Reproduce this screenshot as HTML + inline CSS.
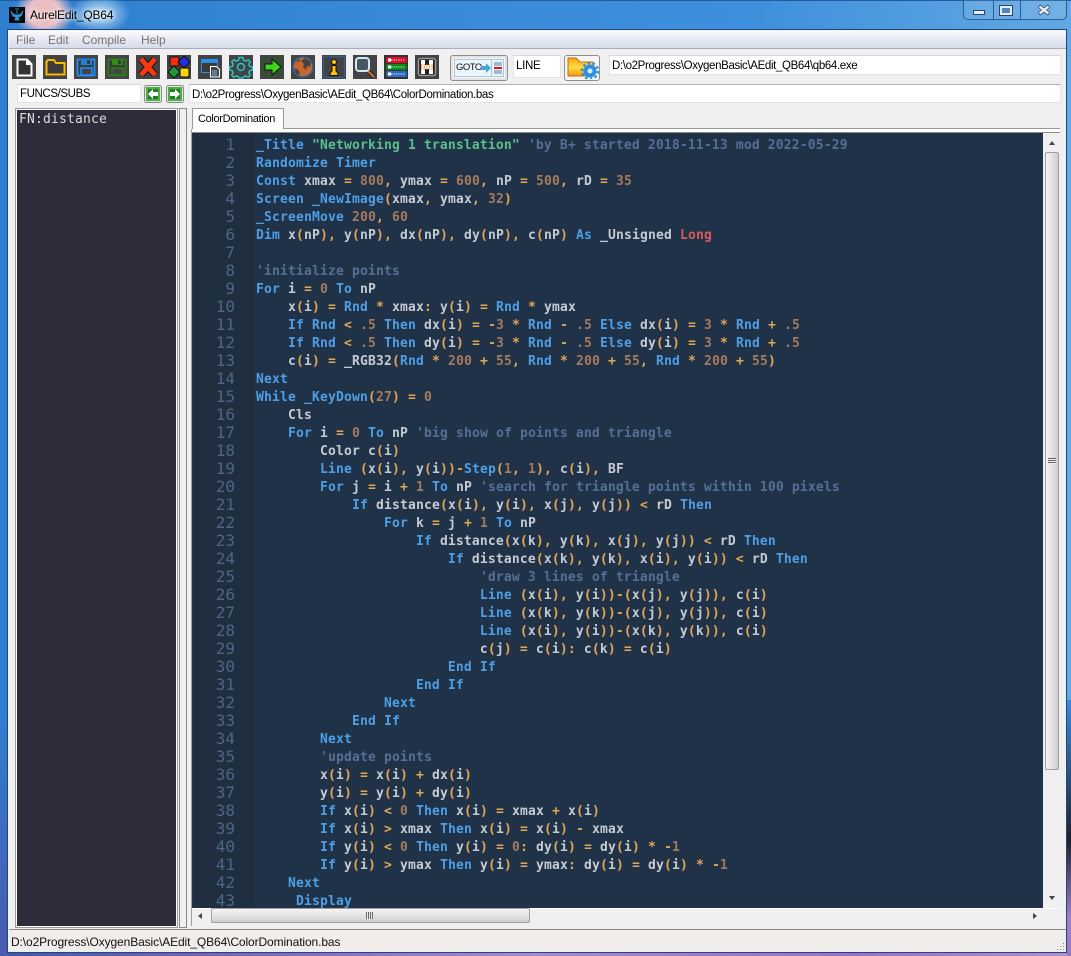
<!DOCTYPE html>
<html><head><meta charset="utf-8"><style>
html,body{margin:0;padding:0;width:1071px;height:956px;overflow:hidden;background:#3a8bdc;font-family:"Liberation Sans",sans-serif;font-size:12px;color:#000}
.a{position:absolute}
#frame{left:0;top:0;width:1071px;height:956px;overflow:hidden;background:linear-gradient(90deg,#2f7fd0 0,#3a8ad9 40%,#3e8fdc 70%,#62a8e2 100%)}
#client{left:8px;top:30px;width:1058px;height:922px;background:#f0f0f0;box-shadow:0 0 0 1px #1d4a78}
.ed{background:#fff;border:1px solid #e4e4e4;border-top-color:#d8d8d8;box-sizing:border-box;white-space:pre;padding-left:2px;font-size:11.5px;letter-spacing:-.36px;overflow:hidden}
svg{position:absolute;display:block}
#code{left:256px;top:137px;width:786px;height:771px;overflow:hidden;font:13px/18px "DejaVu Sans Mono",monospace;letter-spacing:.17px;color:#c5cbd3;white-space:pre;font-weight:400}
#nums{left:193px;top:136px;width:42px;height:772px;overflow:hidden;font:16px/18px "DejaVu Sans Mono",monospace;color:#4c6688;text-align:right;white-space:pre}
i{font-style:normal}
.k{color:#4f9fe6;font-weight:700}.n{color:#a67a5e;font-weight:700}.o{color:#e3a857;font-weight:700}.c{color:#566f96;font-weight:700}.s{color:#5cbf8c;font-weight:700}.r{color:#d9595f;font-weight:700}.w{font-weight:700}
</style></head><body>
<div id="frame" class="a">
<div class="a" style="left:0;top:0;width:1071px;height:1px;background:#1f5d9c"></div>
<div class="a" style="left:14px;top:-12px;width:60px;height:50px;background:radial-gradient(closest-side,#f0b8b4 0,#e8c0c8 55%,rgba(90,150,220,0) 100%)"></div>
<div class="a" style="left:70px;top:-6px;width:60px;height:40px;background:radial-gradient(closest-side,#c8e4f6 0,rgba(200,230,250,.5) 50%,rgba(90,150,220,0) 100%)"></div>
<div class="a" style="left:0;top:945px;width:1071px;height:11px;background:linear-gradient(90deg,#3c5aa8 0,#7a62b8 20%,#a888d0 50%,#9a70c4 80%,#b090d0 100%)"></div>
<div class="a" style="left:1067px;top:700px;width:4px;height:256px;background:linear-gradient(180deg,#3a8ad9 0,#20202a 55%,#a080c8 85%,#9a78c0 100%)"></div>
<div class="a" style="left:0;top:700px;width:8px;height:256px;background:linear-gradient(180deg,#2f7fd0 0,#4a5ab0 100%)"></div>
<svg style="left:9px;top:7px" width="16" height="16" viewBox="0 0 16 16"><rect width="16" height="16" fill="#0a0a0e"/><path d="M8 3v4M6 2h4M2 4l2 5 3 1-1 3h4l-1-3 3-1 2-5-2 3-3 1H7L4 7z" fill="#2f9bd0" stroke="#2f9bd0" stroke-width=".8"/></svg>
<div class="a" style="left:30px;top:7px;font-size:12px;letter-spacing:-.2px;line-height:16px;color:#000;text-shadow:0 0 6px #fff,0 0 6px #fff">AurelEdit_QB64</div>
<!-- caption buttons -->
<div class="a" style="left:963px;top:0;width:104px;height:20px;box-sizing:border-box;border:1px solid #2a609a;border-top:0;border-radius:0 0 5px 5px;background:rgba(255,255,255,.1)"></div>
<div class="a" style="left:993px;top:0;width:1px;height:19px;background:#2a609a"></div>
<div class="a" style="left:1020px;top:0;width:1px;height:19px;background:#2a609a"></div>
<div class="a" style="left:973px;top:10px;width:12px;height:5px;background:#e8eef5;border:1px solid #24476e;box-sizing:border-box"></div>
<div class="a" style="left:1000px;top:6px;width:12px;height:9px;border:2px solid #e8eef5;box-sizing:border-box;outline:1px solid #24476e;background:#4a86c4"></div>
<svg style="left:1037px;top:4px" width="14" height="12"><path d="M2 2l10 8M12 2 2 10" stroke="#24476e" stroke-width="4"/><path d="M2.500 2.500l9 7M11.500 2.500l-9 7" stroke="#e8eef5" stroke-width="2.400"/></svg>
<div id="client" class="a"></div>
<!-- menu -->
<div class="a" style="left:9px;top:31px;width:1057px;height:17px;background:linear-gradient(180deg,#fafbfd 0,#eef0f6 30%,#d6dbeb 100%);border-bottom:1px solid #a9adba"></div>
<div class="a" style="left:16px;top:33px;color:#77736e;font-size:12px;line-height:14px">File</div>
<div class="a" style="left:48px;top:33px;color:#77736e;font-size:12px;line-height:14px">Edit</div>
<div class="a" style="left:82px;top:33px;color:#77736e;font-size:12px;line-height:14px">Compile</div>
<div class="a" style="left:141px;top:33px;color:#77736e;font-size:12px;line-height:14px">Help</div>
<!-- toolbar icons -->
<svg style="left:12px;top:55px" width="24" height="24"><rect width="24" height="24" fill="#434343"/><path d="M5.500 4.500H15L19.500 9V20.500H5.500Z" fill="#333" stroke="#fff" stroke-width="2"/><path d="M14 4v6h6z" fill="#fff"/></svg>
<svg style="left:43px;top:55px" width="24" height="24"><rect width="24" height="24" fill="#434343"/><path d="M3.500 6.500 5 5h6l2 3h8.500v11.500H3.500Z" fill="#3d3d3d" stroke="#fdb900" stroke-width="2"/></svg>
<svg style="left:74px;top:55px" width="24" height="24"><rect width="24" height="24" fill="#434343"/><path d="M3.500 4.500H20.500V20.500H3.500Z" fill="#3a3a3a" stroke="#1e90ff" stroke-width="1.800"/><rect x="7" y="4" width="11" height="6" fill="#1e7fe0"/><rect x="13" y="5" width="3" height="4" fill="#3a3a3a"/><rect x="7" y="13" width="11" height="7" fill="#444" stroke="#1e90ff" stroke-width="1.500"/></svg>
<svg style="left:105px;top:55px" width="24" height="24"><rect width="24" height="24" fill="#434343"/><path d="M3.500 4.500H20.500V20.500H3.500Z" fill="#3a3a3a" stroke="#2e7d1a" stroke-width="1.800"/><rect x="7" y="4" width="11" height="6" fill="#2e8f12"/><rect x="13" y="5" width="3" height="4" fill="#3a3a3a"/><rect x="7" y="13" width="11" height="7" fill="#444" stroke="#2e7d1a" stroke-width="1.500"/></svg>
<svg style="left:136px;top:55px" width="24" height="24"><rect width="24" height="24" fill="#434343"/><path d="M5 4l14 16M19 4 5 20" stroke="#111" stroke-width="7"/><path d="M5 4l14 16M19 4 5 20" stroke="#f93a0e" stroke-width="5"/></svg>
<svg style="left:167px;top:55px" width="24" height="24"><rect width="24" height="24" fill="#434343"/><rect x="3" y="2" width="9" height="9" rx="1" fill="#f52d0c" stroke="#111"/><path d="M17 1l6 6-6 6-6-6z" fill="#2430e0" stroke="#111"/><path d="M7 11l6 6-6 6-6-6z" fill="#1c9a3a" stroke="#111"/><rect x="13" y="13" width="9" height="9" rx="1.500" fill="#fdd20a" stroke="#111"/></svg>
<svg style="left:198px;top:55px" width="24" height="24"><rect width="24" height="24" fill="#434343"/><rect x="3.500" y="4.500" width="16" height="13" fill="#3b3b3b" stroke="#2a90e8"/><rect x="3" y="4" width="17" height="4" fill="#2a90e8"/><path d="M12.500 11.500h6l3 3v7.500h-9z" fill="#444" stroke="#fff"/><path d="M14 16h5M14 18h5M14 20h5" stroke="#7fb7e6"/></svg>
<svg style="left:229px;top:55px" width="24" height="24" viewBox="0 0 24 24"><rect width="24" height="24" fill="#434343"/><path d="M10 2.500h4l.6 2.800 2.200.9 2.400-1.500 2.100 2.100-1.500 2.400.9 2.200 2.800.6v3l-2.800.6-.9 2.200 1.500 2.400-2.100 2.100-2.400-1.500-2.200.9-.6 1.300h-4l-.6-1.300-2.200-.9-2.400 1.500-2.100-2.100 1.500-2.400-.9-2.200-2.800-.6v-3l2.800-.6.9-2.200-1.500-2.400 2.100-2.100 2.400 1.500 2.200-.9z" fill="none" stroke="#27c6cf" stroke-width="1.400"/><circle cx="12" cy="12" r="3.500" fill="none" stroke="#27c6cf" stroke-width="1.500"/></svg>
<svg style="left:260px;top:55px" width="24" height="24"><rect width="24" height="24" fill="#434343"/><rect x="2.500" y="4.500" width="19" height="15" rx="3" fill="none" stroke="#0f6d10"/><path d="M5 9h7V4l9 8-9 8v-5H5z" fill="#3fd51a" stroke="#111"/></svg>
<svg style="left:291px;top:55px" width="24" height="24"><rect width="24" height="24" fill="#434343"/><circle cx="12" cy="12" r="10" fill="#c5662f" stroke="#2d5f99" stroke-width="1.500"/><path d="M3 14c3-1 5 1 6 5l-3 1zM14 3l6 4-1 5-3-1-1 4-3-3 1-3-3-3zM5 6l4-2-1 3z" fill="#444"/></svg>
<svg style="left:322px;top:55px" width="24" height="24"><rect width="24" height="24" fill="#434343"/><rect x="1.500" y="1.500" width="21" height="21" fill="none" stroke="#2d5f99" stroke-width="1.200"/><circle cx="12" cy="7" r="2.500" fill="#fdc30a" stroke="#111"/><path d="M10 10.500h4V16l2 2v2.500H8V18l2-2z" fill="#fdc30a" stroke="#111"/></svg>
<svg style="left:353px;top:55px" width="24" height="24"><rect width="24" height="24" fill="#434343"/><path d="M14 15l7 7" stroke="#222" stroke-width="4"/><path d="M14 15l7 7" stroke="#d9772b" stroke-width="2"/><rect x="3" y="3" width="13" height="13" rx="3" fill="#4a5560" stroke="#cfe8f6" stroke-width="2"/></svg>
<svg style="left:384px;top:55px" width="24" height="24"><rect width="24" height="24" fill="#333"/><rect x="2" y="2" width="21" height="6" rx="2" fill="#e0102a"/><rect x="2" y="9" width="21" height="6" rx="2" fill="#0a8a1a"/><rect x="2" y="16" width="21" height="6" rx="2" fill="#2a6cc8"/><path d="M7 5h13M7 12h13M7 19h13" stroke="#fff" stroke-dasharray="1.200 1.200"/><rect x="4" y="3.500" width="3" height="3" fill="#fff"/><rect x="4" y="10.500" width="3" height="3" fill="#fff"/><rect x="4" y="17.500" width="3" height="3" fill="#fff"/></svg>
<svg style="left:415px;top:55px" width="24" height="24"><rect width="24" height="24" fill="#434343"/><rect x="3.500" y="3.500" width="17" height="17" rx="2" fill="#222" stroke="#999" stroke-width="1.500"/><rect x="6" y="5" width="4" height="14" fill="#fff"/><rect x="14" y="5" width="4" height="14" fill="#fff"/><rect x="10" y="10" width="4" height="4" fill="#fff"/><path d="M6 10h12M6 12h12M6 14h12" stroke="#f08030" stroke-dasharray="1.300 1.300" stroke-width="1.300"/></svg>
<!-- goto -->
<div class="a" style="left:450px;top:55px;width:58px;height:26px;box-sizing:border-box;border:1px solid #8e8e8e;border-radius:3px;background:#f4f4f4;box-shadow:inset 0 0 0 2px #e4e4e4"></div>
<div class="a" style="left:454px;top:59px;width:50px;height:18px;box-sizing:border-box;border:1px solid #a8c8e0;background:#eaf4fb"></div>
<div class="a" style="left:456px;top:60px;font:400 9.500px/16px 'Liberation Sans',sans-serif;letter-spacing:-.5px;color:#111">GOTO</div>
<svg style="left:481px;top:60px" width="24" height="16"><path d="M0 6h5V3l5 5-5 5v-3H0z" fill="#45a5de"/><rect x="10" y="0" width="1" height="16" fill="#a8c8e0"/><path d="M13 3h8M13 5h8M13 11h8M13 13h8" stroke="#5a7ca0"/><path d="M13 8h8" stroke="#e01818" stroke-width="2"/></svg>
<div class="a ed" style="left:513px;top:55px;width:48px;height:23px;line-height:20px;padding-left:2px;font-size:11.500px;letter-spacing:-.3px">LINE</div>
<div class="a" style="left:564px;top:55px;width:36px;height:26px;box-sizing:border-box;border:1px solid #8e8e8e;border-radius:3px;background:#f6f6f6"></div>
<svg style="left:567px;top:57px" width="32" height="22"><defs><linearGradient id="fg" x1="0" y1="0" x2="0" y2="1"><stop offset="0" stop-color="#f7a41c"/><stop offset=".5" stop-color="#ffdc3c"/><stop offset="1" stop-color="#f09a18"/></linearGradient></defs><path d="M1 1h8l4 4h13v14H1z" fill="url(#fg)" stroke="#c06a10"/><circle cx="23" cy="14" r="6.500" fill="#2f8fdc"/><circle cx="23" cy="14" r="8" fill="none" stroke="#2f8fdc" stroke-width="2.500" stroke-dasharray="2.500 2.500"/><circle cx="23" cy="14" r="2.500" fill="#d5ecfb"/></svg>
<div class="a ed" style="left:609px;top:55px;width:452px;height:20px;line-height:20px">D:\o2Progress\OxygenBasic\AEdit_QB64\qb64.exe</div>
<!-- row 2 -->
<div class="a ed" style="left:17px;top:84px;width:124px;height:19px;line-height:19px;letter-spacing:-.4px">FUNCS/SUBS</div>
<svg style="left:144px;top:85px" width="18" height="18"><rect x=".5" y=".5" width="17" height="17" rx="2" fill="#dfe8dc" stroke="#8a8a8a"/><rect x="2" y="2" width="14" height="14" fill="#4fae45"/><rect x="4" y="4" width="10" height="10" fill="#1f7f22"/><path d="M4 9l5-5v3h5v4H9v3z" fill="#fff"/></svg>
<svg style="left:166px;top:85px" width="18" height="18"><rect x=".5" y=".5" width="17" height="17" rx="2" fill="#dfe8dc" stroke="#8a8a8a"/><rect x="2" y="2" width="14" height="14" fill="#4fae45"/><rect x="4" y="4" width="10" height="10" fill="#1f7f22"/><path d="M14 9L9 4v3H4v4h5v3z" fill="#fff"/></svg>
<div class="a ed" style="left:189px;top:84px;width:872px;height:19px;line-height:20px;border-top:1px solid #b0b0b0">D:\o2Progress\OxygenBasic\AEdit_QB64\ColorDomination.bas</div>
<!-- left list -->
<div class="a" style="left:15px;top:108px;width:163px;height:820px;box-sizing:border-box;background:#2d2c3a;border:2px solid #fff;outline:1px solid #9a9a9a;outline-offset:-1px"></div>
<div class="a" style="left:19px;top:112px;font:13px/15px 'DejaVu Sans Mono',monospace;letter-spacing:.17px;color:#dcdce0">FN:distance</div>
<div class="a" style="left:179px;top:108px;width:8px;height:820px;box-sizing:border-box;border:1px solid #8a8a8a;background:#f0f0f0"></div>
<!-- tab -->
<div class="a" style="left:192px;top:108px;width:92px;height:21px;box-sizing:border-box;border:1px solid #9a9a9a;border-bottom:0;background:#fff;text-align:center;line-height:20px;font-size:11px;letter-spacing:-.33px;padding-right:3px">ColorDomination</div>
<div class="a" style="left:284px;top:128px;width:776px;height:1px;background:#9a9a9a"></div>
<div class="a" style="left:192px;top:129px;width:868px;height:4px;background:#fff"></div>
<div class="a" style="left:192px;top:132px;width:868px;height:1px;background:#8a8a8a"></div>
<!-- editor -->
<div class="a" style="left:191px;top:129px;width:1px;height:797px;background:#a0a0a0"></div>
<div class="a" style="left:192px;top:133px;width:851px;height:775px;background:#203247"></div>
<div class="a" style="left:193px;top:133px;width:62px;height:775px;background:#1f2f3f"></div>
<div id="nums" class="a">1
2
3
4
5
6
7
8
9
10
11
12
13
14
15
16
17
18
19
20
21
22
23
24
25
26
27
28
29
30
31
32
33
34
35
36
37
38
39
40
41
42
43</div>
<div id="code" class="a"><i class="k">_Title</i> <i class="s">"Networking 1 translation"</i> <i class="c">'by B+ started 2018-11-13 mod 2022-05-29</i>
<i class="k">Randomize Timer</i>
<i class="k">Const</i> <i class="w">xmax</i> <i class="o">=</i> <i class="n">800</i><i class="o">,</i> <i class="w">ymax</i> <i class="o">=</i> <i class="n">600</i><i class="o">,</i> <i class="w">nP</i> <i class="o">=</i> <i class="n">500</i><i class="o">,</i> <i class="w">rD</i> <i class="o">=</i> <i class="n">35</i>
<i class="k">Screen _NewImage</i><i class="o">(</i><i class="w">xmax</i><i class="o">,</i> <i class="w">ymax</i><i class="o">,</i> <i class="n">32</i><i class="o">)</i>
<i class="k">_ScreenMove</i> <i class="n">200</i><i class="o">,</i> <i class="n">60</i>
<i class="k">Dim</i> <i class="w">x</i><i class="o">(</i><i class="w">nP</i><i class="o">),</i> <i class="w">y</i><i class="o">(</i><i class="w">nP</i><i class="o">),</i> <i class="w">dx</i><i class="o">(</i><i class="w">nP</i><i class="o">),</i> <i class="w">dy</i><i class="o">(</i><i class="w">nP</i><i class="o">),</i> <i class="w">c</i><i class="o">(</i><i class="w">nP</i><i class="o">)</i> <i class="k">As</i> <i class="w">_Unsigned</i> <i class="r">Long</i>

<i class="c">'initialize points</i>
<i class="k">For</i> <i class="w">i</i> <i class="o">=</i> <i class="n">0</i> <i class="k">To</i> <i class="w">nP</i>
    <i class="w">x</i><i class="o">(</i><i class="w">i</i><i class="o">)</i> <i class="o">=</i> <i class="k">Rnd</i> <i class="o">*</i> <i class="w">xmax</i><i class="o">:</i> <i class="w">y</i><i class="o">(</i><i class="w">i</i><i class="o">)</i> <i class="o">=</i> <i class="k">Rnd</i> <i class="o">*</i> <i class="w">ymax</i>
    <i class="k">If Rnd</i> <i class="o">&lt;</i> <i class="n">.5</i> <i class="k">Then</i> <i class="w">dx</i><i class="o">(</i><i class="w">i</i><i class="o">)</i> <i class="o">=</i> <i class="o">-</i><i class="n">3</i> <i class="o">*</i> <i class="k">Rnd</i> <i class="o">-</i> <i class="n">.5</i> <i class="k">Else</i> <i class="w">dx</i><i class="o">(</i><i class="w">i</i><i class="o">)</i> <i class="o">=</i> <i class="n">3</i> <i class="o">*</i> <i class="k">Rnd</i> <i class="o">+</i> <i class="n">.5</i>
    <i class="k">If Rnd</i> <i class="o">&lt;</i> <i class="n">.5</i> <i class="k">Then</i> <i class="w">dy</i><i class="o">(</i><i class="w">i</i><i class="o">)</i> <i class="o">=</i> <i class="o">-</i><i class="n">3</i> <i class="o">*</i> <i class="k">Rnd</i> <i class="o">-</i> <i class="n">.5</i> <i class="k">Else</i> <i class="w">dy</i><i class="o">(</i><i class="w">i</i><i class="o">)</i> <i class="o">=</i> <i class="n">3</i> <i class="o">*</i> <i class="k">Rnd</i> <i class="o">+</i> <i class="n">.5</i>
    <i class="w">c</i><i class="o">(</i><i class="w">i</i><i class="o">)</i> <i class="o">=</i> <i class="w">_RGB32</i><i class="o">(</i><i class="k">Rnd</i> <i class="o">*</i> <i class="n">200</i> <i class="o">+</i> <i class="n">55</i><i class="o">,</i> <i class="k">Rnd</i> <i class="o">*</i> <i class="n">200</i> <i class="o">+</i> <i class="n">55</i><i class="o">,</i> <i class="k">Rnd</i> <i class="o">*</i> <i class="n">200</i> <i class="o">+</i> <i class="n">55</i><i class="o">)</i>
<i class="k">Next</i>
<i class="k">While _KeyDown</i><i class="o">(</i><i class="n">27</i><i class="o">)</i> <i class="o">=</i> <i class="n">0</i>
    <i class="w">Cls</i>
    <i class="k">For</i> <i class="w">i</i> <i class="o">=</i> <i class="n">0</i> <i class="k">To</i> <i class="w">nP</i> <i class="c">'big show of points and triangle</i>
        <i class="w">Color c</i><i class="o">(</i><i class="w">i</i><i class="o">)</i>
        <i class="k">Line</i> <i class="o">(</i><i class="w">x</i><i class="o">(</i><i class="w">i</i><i class="o">),</i> <i class="w">y</i><i class="o">(</i><i class="w">i</i><i class="o">))-</i><i class="k">Step</i><i class="o">(</i><i class="n">1</i><i class="o">,</i> <i class="n">1</i><i class="o">),</i> <i class="w">c</i><i class="o">(</i><i class="w">i</i><i class="o">),</i> <i class="w">BF</i>
        <i class="k">For</i> <i class="w">j</i> <i class="o">=</i> <i class="w">i</i> <i class="o">+</i> <i class="n">1</i> <i class="k">To</i> <i class="w">nP</i> <i class="c">'search for triangle points within 100 pixels</i>
            <i class="k">If</i> <i class="w">distance</i><i class="o">(</i><i class="w">x</i><i class="o">(</i><i class="w">i</i><i class="o">),</i> <i class="w">y</i><i class="o">(</i><i class="w">i</i><i class="o">),</i> <i class="w">x</i><i class="o">(</i><i class="w">j</i><i class="o">),</i> <i class="w">y</i><i class="o">(</i><i class="w">j</i><i class="o">))</i> <i class="o">&lt;</i> <i class="w">rD</i> <i class="k">Then</i>
                <i class="k">For</i> <i class="w">k</i> <i class="o">=</i> <i class="w">j</i> <i class="o">+</i> <i class="n">1</i> <i class="k">To</i> <i class="w">nP</i>
                    <i class="k">If</i> <i class="w">distance</i><i class="o">(</i><i class="w">x</i><i class="o">(</i><i class="w">k</i><i class="o">),</i> <i class="w">y</i><i class="o">(</i><i class="w">k</i><i class="o">),</i> <i class="w">x</i><i class="o">(</i><i class="w">j</i><i class="o">),</i> <i class="w">y</i><i class="o">(</i><i class="w">j</i><i class="o">))</i> <i class="o">&lt;</i> <i class="w">rD</i> <i class="k">Then</i>
                        <i class="k">If</i> <i class="w">distance</i><i class="o">(</i><i class="w">x</i><i class="o">(</i><i class="w">k</i><i class="o">),</i> <i class="w">y</i><i class="o">(</i><i class="w">k</i><i class="o">),</i> <i class="w">x</i><i class="o">(</i><i class="w">i</i><i class="o">),</i> <i class="w">y</i><i class="o">(</i><i class="w">i</i><i class="o">))</i> <i class="o">&lt;</i> <i class="w">rD</i> <i class="k">Then</i>
                            <i class="c">'draw 3 lines of triangle</i>
                            <i class="k">Line</i> <i class="o">(</i><i class="w">x</i><i class="o">(</i><i class="w">i</i><i class="o">),</i> <i class="w">y</i><i class="o">(</i><i class="w">i</i><i class="o">))-(</i><i class="w">x</i><i class="o">(</i><i class="w">j</i><i class="o">),</i> <i class="w">y</i><i class="o">(</i><i class="w">j</i><i class="o">)),</i> <i class="w">c</i><i class="o">(</i><i class="w">i</i><i class="o">)</i>
                            <i class="k">Line</i> <i class="o">(</i><i class="w">x</i><i class="o">(</i><i class="w">k</i><i class="o">),</i> <i class="w">y</i><i class="o">(</i><i class="w">k</i><i class="o">))-(</i><i class="w">x</i><i class="o">(</i><i class="w">j</i><i class="o">),</i> <i class="w">y</i><i class="o">(</i><i class="w">j</i><i class="o">)),</i> <i class="w">c</i><i class="o">(</i><i class="w">i</i><i class="o">)</i>
                            <i class="k">Line</i> <i class="o">(</i><i class="w">x</i><i class="o">(</i><i class="w">i</i><i class="o">),</i> <i class="w">y</i><i class="o">(</i><i class="w">i</i><i class="o">))-(</i><i class="w">x</i><i class="o">(</i><i class="w">k</i><i class="o">),</i> <i class="w">y</i><i class="o">(</i><i class="w">k</i><i class="o">)),</i> <i class="w">c</i><i class="o">(</i><i class="w">i</i><i class="o">)</i>
                            <i class="w">c</i><i class="o">(</i><i class="w">j</i><i class="o">)</i> <i class="o">=</i> <i class="w">c</i><i class="o">(</i><i class="w">i</i><i class="o">):</i> <i class="w">c</i><i class="o">(</i><i class="w">k</i><i class="o">)</i> <i class="o">=</i> <i class="w">c</i><i class="o">(</i><i class="w">i</i><i class="o">)</i>
                        <i class="k">End If</i>
                    <i class="k">End If</i>
                <i class="k">Next</i>
            <i class="k">End If</i>
        <i class="k">Next</i>
        <i class="c">'update points</i>
        <i class="w">x</i><i class="o">(</i><i class="w">i</i><i class="o">)</i> <i class="o">=</i> <i class="w">x</i><i class="o">(</i><i class="w">i</i><i class="o">)</i> <i class="o">+</i> <i class="w">dx</i><i class="o">(</i><i class="w">i</i><i class="o">)</i>
        <i class="w">y</i><i class="o">(</i><i class="w">i</i><i class="o">)</i> <i class="o">=</i> <i class="w">y</i><i class="o">(</i><i class="w">i</i><i class="o">)</i> <i class="o">+</i> <i class="w">dy</i><i class="o">(</i><i class="w">i</i><i class="o">)</i>
        <i class="k">If</i> <i class="w">x</i><i class="o">(</i><i class="w">i</i><i class="o">)</i> <i class="o">&lt;</i> <i class="n">0</i> <i class="k">Then</i> <i class="w">x</i><i class="o">(</i><i class="w">i</i><i class="o">)</i> <i class="o">=</i> <i class="w">xmax</i> <i class="o">+</i> <i class="w">x</i><i class="o">(</i><i class="w">i</i><i class="o">)</i>
        <i class="k">If</i> <i class="w">x</i><i class="o">(</i><i class="w">i</i><i class="o">)</i> <i class="o">&gt;</i> <i class="w">xmax</i> <i class="k">Then</i> <i class="w">x</i><i class="o">(</i><i class="w">i</i><i class="o">)</i> <i class="o">=</i> <i class="w">x</i><i class="o">(</i><i class="w">i</i><i class="o">)</i> <i class="o">-</i> <i class="w">xmax</i>
        <i class="k">If</i> <i class="w">y</i><i class="o">(</i><i class="w">i</i><i class="o">)</i> <i class="o">&lt;</i> <i class="n">0</i> <i class="k">Then</i> <i class="w">y</i><i class="o">(</i><i class="w">i</i><i class="o">)</i> <i class="o">=</i> <i class="n">0</i><i class="o">:</i> <i class="w">dy</i><i class="o">(</i><i class="w">i</i><i class="o">)</i> <i class="o">=</i> <i class="w">dy</i><i class="o">(</i><i class="w">i</i><i class="o">)</i> <i class="o">*</i> <i class="o">-</i><i class="n">1</i>
        <i class="k">If</i> <i class="w">y</i><i class="o">(</i><i class="w">i</i><i class="o">)</i> <i class="o">&gt;</i> <i class="w">ymax</i> <i class="k">Then</i> <i class="w">y</i><i class="o">(</i><i class="w">i</i><i class="o">)</i> <i class="o">=</i> <i class="w">ymax</i><i class="o">:</i> <i class="w">dy</i><i class="o">(</i><i class="w">i</i><i class="o">)</i> <i class="o">=</i> <i class="w">dy</i><i class="o">(</i><i class="w">i</i><i class="o">)</i> <i class="o">*</i> <i class="o">-</i><i class="n">1</i>
    <i class="k">Next</i>
     <i class="k">Display</i></div>
<!-- v scrollbar -->
<div class="a" style="left:1043px;top:133px;width:17px;height:775px;background:#f0f0f0"></div>
<svg style="left:1048px;top:140px" width="8" height="6"><path d="M4 1 7 5H1z" fill="#444"/></svg>
<svg style="left:1048px;top:895px" width="8" height="6"><path d="M4 5 7 1H1z" fill="#444"/></svg>
<div class="a" style="left:1045px;top:152px;width:14px;height:618px;box-sizing:border-box;border:1px solid #a0a0a0;border-radius:2px;background:linear-gradient(90deg,#f4f4f4,#e4e4e4 50%,#cfcfcf)"></div>
<div class="a" style="left:1048px;top:458px;width:8px;height:6px;background:repeating-linear-gradient(180deg,#666 0 1px,#eee 1px 2px)"></div>
<!-- h scrollbar -->
<div class="a" style="left:192px;top:908px;width:868px;height:17px;background:#f0f0f0;border-top:1px solid #fff;box-sizing:border-box"></div>
<svg style="left:197px;top:912px" width="6" height="8"><path d="M1 4 5 1v6z" fill="#444"/></svg>
<svg style="left:1032px;top:912px" width="6" height="8"><path d="M5 4 1 1v6z" fill="#444"/></svg>
<div class="a" style="left:211px;top:908px;width:319px;height:15px;box-sizing:border-box;border:1px solid #a0a0a0;border-radius:2px;background:linear-gradient(180deg,#f4f4f4,#e4e4e4 50%,#cfcfcf)"></div>
<div class="a" style="left:366px;top:912px;width:7px;height:7px;background:repeating-linear-gradient(90deg,#666 0 1px,#eee 1px 2px)"></div>
<!-- status -->
<div class="a" style="left:9px;top:929px;width:1057px;height:23px;box-sizing:border-box;border-top:1px solid #8a8a8a;background:#f0edeb;line-height:25px;padding-left:2px;font-size:12px;letter-spacing:-.11px;color:#111">D:\o2Progress\OxygenBasic\AEdit_QB64\ColorDomination.bas</div>
<svg style="left:1056px;top:942px" width="10" height="10"><path d="M7 1h1v1H7zM4 4h1v1H4zM7 4h1v1H7zM1 7h1v1H1zM4 7h1v1H4zM7 7h1v1H7z" fill="#888"/></svg>
</div>
</body></html>
